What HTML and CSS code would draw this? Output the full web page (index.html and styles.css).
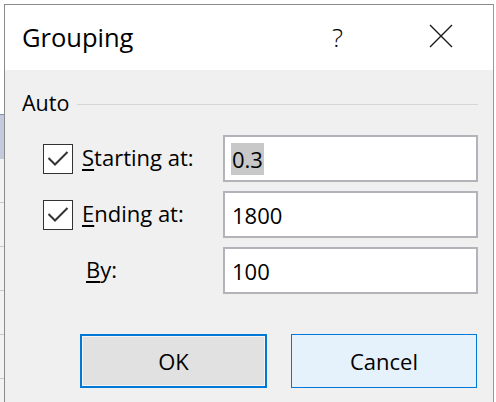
FILE: index.html
```html
<!DOCTYPE html>
<html>
<head>
<meta charset="utf-8">
<link rel="stylesheet" href="styles.css">
</head>
<body>
<div class="sheet-left"></div>
<div class="dialog">
  <div class="titlebar">
    <span class="title">Grouping</span>
    <span class="help">?</span>
    <svg class="close" width="24" height="24" viewBox="0 0 24 24"><path d="M1 1 L23 23 M23 1 L1 23" stroke="#1a1a1a" stroke-width="1.4" fill="none"/></svg>
  </div>
  <div class="body">
    <div class="group-head">
      <span class="group-label">Auto</span>
      <span class="group-line"></span>
    </div>
    <div class="rows">
      <div class="row">
        <span class="check"><svg width="30" height="30" viewBox="0 0 30 30"><polyline points="5.5,15 12,21.5 24.5,9" stroke="#333" stroke-width="2" fill="none"/></svg></span>
        <span class="label"><u>S</u>tarting at:</span>
        <span class="field"><span class="sel">0.3</span></span>
      </div>
      <div class="row">
        <span class="check"><svg width="30" height="30" viewBox="0 0 30 30"><polyline points="5.5,15 12,21.5 24.5,9" stroke="#333" stroke-width="2" fill="none"/></svg></span>
        <span class="label"><u>E</u>nding at:</span>
        <span class="field">1800</span>
      </div>
      <div class="row">
        <span class="nocheck"></span>
        <span class="label by"><u>B</u>y:</span>
        <span class="field">100</span>
      </div>
    </div>
    <div class="buttons">
      <span class="btn ok">OK</span>
      <span class="btn cancel">Cancel</span>
    </div>
  </div>
</div>
</body>
</html>
```
FILE: styles.css
```css
html, body {
  margin: 0;
  padding: 0;
}
body {
  width: 496px;
  height: 402px;
  overflow: hidden;
  background: #ffffff;
  font-family: "Open Sans", "Noto Sans", sans-serif;
  color: #000;
  position: relative;
}
.sheet-left {
  position: absolute;
  left: 0;
  top: 114px;
  width: 4px;
  height: 288px;
  background:
    linear-gradient(#7f8db5, #7f8db5) 0 0 / 4px 1px no-repeat,
    linear-gradient(#c3cadb, #c3cadb) 0 1px / 4px 44px no-repeat,
    repeating-linear-gradient(#f3f3f3 0, #f3f3f3 43px, #c8c8c8 43px, #c8c8c8 44px) 0 45px / 4px 243px no-repeat;
}
.dialog {
  position: absolute;
  left: 4px;
  top: 4px;
  width: 488px;
  height: 398px;
  overflow: hidden;
  border: 1px solid #8a8a8a;
  border-bottom: none;
  border-right-color: #9a9a9a;
  background: #f0f0f0;
  display: flex;
  flex-direction: column;
}
.titlebar {
  height: 65px;
  flex: none;
  background: #fff;
  display: flex;
  align-items: center;
  padding-left: 17px;
  box-sizing: border-box;
}
.title {
  font-size: 25.5px;
  flex: 1;
  margin-top: -2px;
}
.help {
  font-size: 26px;
  font-weight: 300;
  margin-right: 86px;
  margin-top: -2px;
}
.close {
  margin-right: 40px;
  margin-top: -3px;
}
.body {
  padding: 0 15px 0 17px;
  display: flex;
  flex-direction: column;
}
.group-head {
  display: flex;
  align-items: center;
  height: 36px;
  margin-top: 16px;
}
.group-label {
  font-size: 21.5px;
  margin-right: 8px;
  margin-top: -4px;
}
.group-line {
  flex: 1;
  height: 1px;
  background: #d6d6d6;
}
.rows {
  display: flex;
  flex-direction: column;
  gap: 9px;
  margin-top: 13px;
}
.row {
  display: flex;
  align-items: center;
  height: 47px;
}
.check {
  width: 30px;
  height: 30px;
  box-sizing: border-box;
  border: 1.5px solid #333;
  background: #fff;
  margin-left: 21px;
  display: flex;
}
.check svg {
  margin: -1.5px;
}
.nocheck {
  width: 30px;
  margin-left: 21px;
}
.label {
  font-size: 22px;
  margin-left: 9px;
  width: 141px;
  margin-top: -3px;
}
.label u {
  text-underline-offset: 3px;
  text-decoration-thickness: 1.5px;
}
.by {
  margin-left: 13px;
  width: 137px;
}
.field {
  width: 255px;
  height: 47px;
  box-sizing: border-box;
  border: 2px solid #b3b3b9;
  background: #fff;
  font-size: 22px;
  display: flex;
  align-items: center;
  padding-left: 7px;
}
.sel {
  background: #c8c8c8;
  height: 32px;
  line-height: 32px;
  padding: 0 1px;
  margin-left: -1px;
}
.buttons {
  display: flex;
  justify-content: flex-end;
  gap: 24px;
  margin-top: 40px;
}
.btn {
  width: 187px;
  height: 54px;
  box-sizing: border-box;
  display: flex;
  align-items: center;
  justify-content: center;
  font-size: 22px;
}
.ok {
  border: 2px solid #0078d7;
  background: #e1e1e1;
  box-shadow: inset 0 0 0 1px #f4f4f4;
}
.cancel {
  border: 1.5px solid #0078d7;
  background: #e5f1fb;
  width: 186px;
  margin-right: 1px;
}
```
